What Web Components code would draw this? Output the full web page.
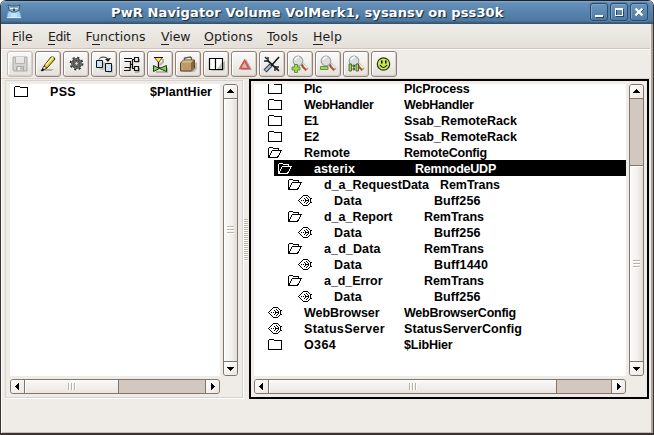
<!DOCTYPE html>
<html lang="en">
<head>
<meta charset="utf-8">
<title>PwR Navigator</title>
<style>
html,body{margin:0;width:654px;height:435px;overflow:hidden;background:#fff}
</style>
</head>
<body>
<nav-window></nav-window>
<script>
const define=(name,css,html,ready)=>customElements.define(name,class extends HTMLElement{
  connectedCallback(){
    if(this.shadowRoot)return;
    const root=this.attachShadow({mode:'open'});
    root.innerHTML=`<style>:host{box-sizing:border-box}*{box-sizing:border-box}${css}</style>${typeof html==='function'?html(this):html}`;
    if(ready)ready(this,root);
  }
});

/* Text run whose letter spacing is adjusted to fill the given width */
define('fit-text',':host{display:block;white-space:nowrap}span{display:inline-block;white-space:pre}u{text-decoration:none;box-shadow:0 1px 0 #222}',
  el=>{const t=el.getAttribute('text'),k=el.getAttribute('key');
    if(!k)return `<span>${t}</span>`;
    const i=t.indexOf(k);
    return `<span>${t.slice(0,i)}<u>${k}</u>${t.slice(i+1)}</span>`},
  (el,root)=>{const s=root.querySelector('span'),w=+el.getAttribute('w'),t=el.getAttribute('text');
    if(w)s.style.letterSpacing=((w-s.getBoundingClientRect().width)/t.length)+'px';});

define('window-button',`:host{display:block;width:18px;height:18px;border:1px solid #2d4b68;border-radius:3px;background:linear-gradient(#6c96be,#4f7ba5);box-shadow:inset 1px 1px 0 #7ea5ca,0 0 0 1px #5682ab}svg{display:block}`,
  el=>`<svg width="16" height="16" viewBox="0 0 16 16" shape-rendering="crispEdges">${{
    min:'<path d="M5 12h8v2H5z" fill="#24425e"/><path d="M4 11h8v2H4z" fill="#fff"/>',
    max:'<path d="M5.5 5.5h7v7h-7z" fill="none" stroke="#29475f"/><path d="M4 4h8v8H4zM5 6v5h6V6z" fill="#fff" fill-rule="evenodd"/>',
    close:'<path d="m5 5 7 7m0-7-7 7" stroke="#24425e" stroke-width="2"/><path d="m4.500 4.500 7 7m0-7-7 7" stroke="#fff" stroke-width="2.400" shape-rendering="auto"/>'}[el.getAttribute('kind')]}</svg>`);

define('title-bar',`:host{display:grid;grid-template-columns:110px 1fr auto;height:24px;background:linear-gradient(#222 0 1px,#7ba2c8 1px 2px,#658fb8 3px,#5481ab 14px,#4e789f 21px,#416486 22px,#344f68 24px);border-radius:5px 5px 0 0}
.logo{padding:4px 0 0 5px}svg{display:block}fit-text{font:bold 13px/24px "DejaVu Sans",sans-serif;color:#fff;text-shadow:1px 1px 1px #142536;padding-top:1px}
.buttons{display:flex;gap:2px;padding:3px 5px 0 0}`,
`<div class="logo"><svg width="16" height="16" viewBox="0 0 16 16"><path d="M3 7Q1 9 1 14h14q0-5-2-7z" fill="#a9d2f3" stroke="#6d9ac0" stroke-width=".8"/><path d="m2 1 3 1h6l3-1-1 5-3 2H6L3 6z" fill="#8eb0ca" stroke="#37566f" stroke-width=".9"/><path d="M4 4h3v1H4zm5 0h3v1H9z" fill="#d7efff"/><path d="M7 5h2v2H7z" fill="#304a61"/><path d="M5 9h6v4H5z" fill="#c2e2fa"/><path d="M1 13h14v1H1z" fill="#d9eefd"/></svg></div>
<fit-text text="PwR Navigator Volume VolMerk1, sysansv on pss30k" w="392.5"></fit-text>
<div class="buttons"><window-button kind="min"></window-button><window-button kind="max"></window-button><window-button kind="close"></window-button></div>`);

define('menu-bar',`:host{display:flex;height:25px;padding:1px 0 0 11px;margin-right:3px;background:linear-gradient(#f0ece8,#e4dfd8);border-bottom:1px solid #cfc5bb;font:12.5px/24px "DejaVu Sans",sans-serif;color:#1c1c1c}fit-text{width:var(--s)}`,
  [['File','F',20.5,36],['Edit','E',22.5,37.5],['Functions','u',60,75.5],['View','V',29.5,43],['Options','O',49,63],['Tools','T',31,46],['Help','H',29,40]]
  .map(([t,k,w,s])=>`<fit-text text="${t}" key="${k}" w="${w}" style="--s:${s}px"></fit-text>`).join(''));

const lens='<path d="m15 13 5 6" stroke="#aaa49f" stroke-width="4"/><path d="m14 13 5 5" stroke="#eee" stroke-width="4"/><path d="m15 15 4 4" stroke="#bd4d18" stroke-width="2"/><path d="m14 13 2 2" stroke="#555" stroke-width="2"/><circle cx="11" cy="10" r="4.800" fill="#d9dddd" stroke="#a3a3a3" stroke-width="1.200"/><path d="M8 9q1-3 4-3" stroke="#fff" stroke-width="1.500" fill="none"/>';
const icons={
  save:'<path d="M6 6h14v14H7l-1-1z" fill="#d5d3d0" stroke="#aaa7a3"/><path d="M8.500 6v6.500h9V6" fill="#e9e7e4" stroke="#b6b2ae"/><path d="M9.500 20v-4.500h7V20" fill="#c3c0bc" stroke="#aaa"/><path d="M11 16h2v3h-2z" fill="#f0eeeb"/>',
  pencil:'<path d="M8 20h8l3-2h-7z" fill="#b3afa9"/><path d="m9 15 7-9q3-1 4 2l-8 9-5 3z" fill="#e5ca29" stroke="#312d12"/><path d="m11 14 7-8" stroke="#fff49a" stroke-width="1.500"/><path d="m9 15 3 2-6 3z" fill="#eee" stroke="#222" stroke-width=".7"/><path d="m6 20 2-3 1 2z" fill="#000"/>',
  gear:'<g transform="translate(13.500 12.500)"><circle r="6" fill="none" stroke="#333" stroke-width="1.800" stroke-dasharray="2.200 2.510"/><circle r="3.800" fill="none" stroke="#4a4a4a" stroke-width="3.200"/><circle r="3.900" fill="none" stroke="#878787" stroke-dasharray="2 1"/><circle r="1.800" fill="#ddd" stroke="#222" stroke-width=".8"/></g>',
  copy:'<path d="M7 11h7v8H9zM16 14h6v8h-5z" fill="#c9c5c0"/><path d="M5.500 9.500h6v7h-6zM14.500 12.500h6v8h-6z" fill="#cbe2fb" stroke="#111"/><path d="M8 8.500q1-3 5-2.500t4 3" fill="none" stroke="#333"/><path d="m14 8 6-1-3 4z" fill="#222"/>',
  net:'<path d="M20 8v3h-4M20 17v4h-4" stroke="#777" fill="none"/><path d="M5.500 10.500h6v6h-6M15.500 6.500h4v4h-4zM15.500 15.500h4v4h-4zM11.500 13.500h2v4h2M13.500 13.500v-5h2M5 7.500h8M5 19.500h6v-3" fill="none" stroke="#111" stroke-width="1.200"/>',
  valve:'<path d="M16 8v3l-3 3M20 17v4H9" stroke="#b7b3ad" stroke-width="2" fill="none"/><path d="M7.500 6.500h8l-4 5z" fill="#ffe54c" stroke="#555020"/><path d="M7 6.500h9" stroke="#111"/><path d="M11.500 11v6h2" stroke="#111" fill="none" stroke-width="1.300"/><path d="m6.500 14.500 6 3-6 3zM19.500 14.500v6l-7-3z" fill="#8ece52" stroke="#173f13"/>',
  case:'<path d="M7 21h12l3-3v-7z" fill="#bdb8b0"/><path d="M9.500 10V7l6-1 1 1v3" fill="none" stroke="#645b4c" stroke-width="1.400"/><path d="m5.500 12 3-3h11v8l-3 3h-11z" fill="#bb9c69" stroke="#594930"/><path d="M6 12h10v7H6z" fill="#bd9b67"/><path d="m16 12 3-3v8l-3 3z" fill="#87683c"/><path d="m8.500 9.500-2 2H16l2-2z" fill="#d6bc8f"/>',
  book:'<path d="m8 20h12l2-2v-8z" fill="#bcb8b2"/><path d="M6.500 7.500h13v11h-13z" fill="#fff" stroke="#000" stroke-width="1.200"/><path d="M12.500 7v12" stroke="#000" stroke-width="1.200"/><path d="m14 18 5-7v7z" fill="#c6c3bf"/>',
  alarm:'<path d="m15 8 6 11H10z" fill="#aaa7a3"/><path d="m13.500 9.500 4.500 8H9z" fill="#c5c0b9" stroke="#e34d45" stroke-width="1.700"/>',
  tools:'<path d="m8 9 11 10" stroke="#222" stroke-width="1.800"/><path d="m20 6-8 9" stroke="#111" stroke-width="1.500"/><path d="m12 14-6 6" stroke="#34414b" stroke-width="4.200"/><path d="m11.500 14.500-5 5" stroke="#9fbfd8" stroke-width="2.200"/><path d="M9 6v4H5m11 10v-4h4M6 6l2 2m10 10 2 2" fill="none" stroke="#222" stroke-width="1.400"/>',
  plus:lens+'<path d="M7.500 13.500h3v2.500h2.500v3h-2.500v2.500h-3V19H5v-3h2.500z" fill="#9bd94a" stroke="#587b31" stroke-width=".8"/>',
  minus:lens+'<path d="M5.500 15.500h7.500v3H5.500z" fill="#9bd94a" stroke="#587b31" stroke-width=".8"/>',
  one:lens+'<path d="M6 13h2.500v7H6zM13 13h2.500v7H13zM10 14h1.500v2H10zM10 17h1.500v2H10z" fill="#9bd94a" stroke="#303d25" stroke-width=".7"/>',
  smile:'<circle cx="12.500" cy="13" r="6.200" fill="#c9e458" stroke="#303817" stroke-width="1.200"/><path d="M10 9.500h1.500v3H10zM14 9.500h1.500v3H14z" fill="#111"/><path d="M9 14q3.500 5 7 0" fill="none" stroke="#111" stroke-width="1.200"/>'};
define('tool-button',`:host{display:block;width:26px;height:26px;border:1px solid #91817a;border-radius:3px;background:linear-gradient(#faf9f8,#efedea 55%,#e5e0db);box-shadow:inset 1px 1px 0 #fff,inset -1px -1px 0 #d7cfc7}:host([off]){border-color:#c4bbb1}svg{display:block;margin:-1px}`,
  el=>`<svg width="26" height="26" viewBox="0 0 26 26">${icons[el.getAttribute('icon')]}</svg>`);
define('tool-bar',`:host{display:flex;gap:2px;height:30px;padding:1px 0 0 6px;margin-right:3px;border-top:1px solid #fbfaf8;border-bottom:1px solid #d9d2ca}`,
  Object.keys(icons).map((k,i)=>`<tool-button icon="${k}"${i?'':' off'}></tool-button>`).join(''));

/* Scroll bar: before = trough ahead of the thumb, size = thumb length */
define('scroll-bar',`:host{display:flex;border:1px solid #82756c;border-radius:3px;background:#d2c8bf;overflow:hidden}
:host([dir=v]){flex-direction:column;width:15px;height:292px}:host([dir=h]){height:15px}
.b{flex:none;width:13px;height:13px;background:linear-gradient(135deg,#fff,#eae6e2);display:block}
.gap{flex:none}.t{flex:none;display:flex;align-items:center;justify-content:center;background:linear-gradient(#fbfaf9,#e9e5e1);box-shadow:inset 1px 1px 0 #fff}
:host([dir=v]) .t{background:linear-gradient(90deg,#fcfbfa,#f2f0ed 60%,#e1dcd6);border:solid #82756c;border-width:1px 0}
:host([dir=h]) .t{border:solid #82756c;border-width:0 1px}.fill{flex:1}
i{display:block;width:8px;height:7px;background:repeating-linear-gradient(90deg,#bdb2a3 0 1px,#fff 1px 2px,transparent 2px 3px)}
:host([dir=v]) i{width:7px;height:8px;background:repeating-linear-gradient(#bdb2a3 0 1px,#fff 1px 2px,transparent 2px 3px)}
.first{border:0 solid #82756c}.last{border:0 solid #82756c}:host([dir=h][split]) .last{border-left-width:1px;width:14px}:host([dir=v][split]) .first{border-bottom-width:1px;height:14px}`,
  el=>{const v=el.getAttribute('dir')==='v',p=v?'height':'width';
    const a=v?['M6 4h1v1h1v1h1v1h1v1H3V7h1V6h1V5h1z','M3 5h7v1H9v1H8v1H7v1H6V8H5V7H4V6H3z']:['M8 3v7H7V9H6V8H5V7H4V6h1V5h1V4h1V3z','M5 3v7h1V9h1V8h1V7h1V6H8V5H7V4H6V3z'];
    const s=d=>`<svg width="13" height="13" style="display:block" shape-rendering="crispEdges"><path d="${d}"/></svg>`;
    return `<div class="b first">${s(a[0])}</div><div class="gap" style="${p}:${el.getAttribute('before')}px"></div><div class="t" style="${p}:${el.getAttribute('size')}px"><i></i></div><div class="fill"></div><div class="b last">${s(a[1])}</div>`});

const glyphs={
  folder:'<path d="M.5 13.500V4.500l1-1h4l1 1h7v9z" fill="none" stroke="currentColor"/>',
  open:'<path d="M.5 13.500v-9l1-1h3l1 1h5v2M.5 13.500h9l4-7H4.500l-4 7" fill="none" stroke="currentColor"/>',
  leaf:'<path d="M0 8.500h1M1 7.500h1M1 9.500h1M2 6.500h1M2 10.500h1M3 5.500h1M3 11.500h1M4 4.500h1M4 12.500h1M5 3.500h5M5 13.500h5M10 4.500h1M10 12.500h1M11 5.500h1M11 11.500h1M12.500 6v5M13 6.500h1M13 10.500h1M3 8.500h1M5 8.500h1M7 8.500h1M9 8.500h2M6 6.500h1M7 7.500h1M8 8.500h1M7 9.500h1M6 10.500h1M8 5.500h1M9 6.500h1M10 7.500h1M10 9.500h1M9 10.500h1M8 11.500h1" stroke="currentColor"/>'};
define('tree-row',`:host{display:flex;height:16px;flex:none;color:#000;font:bold 12.5px/16px "Liberation Sans",Arial,sans-serif}
.r{display:grid;flex:1;grid-template-columns:36px var(--n) 1fr;margin-left:var(--m);padding-left:var(--p)}:host([sel]) .r{background:#000;color:#fff}svg{display:block}fit-text{padding-top:1px;height:16px;line-height:16px}`,
  el=>{const g=n=>el.getAttribute(n),l=+g('level'),sel=el.hasAttribute('sel'),m=sel?20:14+l*10-(+g('shift')||0);
    return `<div class="r" style="--m:${m}px;--p:${sel?4:0}px;--n:${g('col')||100}px"><svg width="14" height="16" shape-rendering="crispEdges">${glyphs[g('icon')]}</svg><fit-text text="${g('name')}" w="${g('nw')}"></fit-text><fit-text text="${g('type')}" w="${g('tw')}"></fit-text></div>`});

define('tree-pane',`:host{display:grid;grid-template-columns:var(--w) 15px;gap:3px;align-content:start;padding:var(--pad)}
.list{background:#fff;height:292px;overflow:hidden;display:flex;flex-direction:column}.rows{display:flex;flex-direction:column;margin-top:var(--offset)}`,
  `<div class="list"><div class="rows"><slot></slot></div></div><slot name="v"></slot><slot name="h"></slot>`);

const row=([level,icon,name,type,nw,tw,col,sel])=>`<tree-row level="${level}" icon="${icon}" name="${name}" type="${type}" nw="${nw}" tw="${tw}" ${col?`col="${col}"`:''} ${sel?'sel':''}></tree-row>`;
const tree=[
[0,'folder','Plc','PlcProcess',18,65.5],
[0,'folder','WebHandler','WebHandler',69.5,69.5],
[0,'folder','E1','Ssab_RemoteRack',14,113],
[0,'folder','E2','Ssab_RemoteRack',15,113],
[0,'open','Remote','RemoteConfig',46,83],
[1,'open','asterix','RemnodeUDP',41,81,101,1],
[2,'open','d_a_RequestData','RemTrans',105,60,116],
[3,'leaf','Data','Buff256',28,46.5],
[2,'open','d_a_Report','RemTrans',68.5,60],
[3,'leaf','Data','Buff256',28,46.5],
[2,'open','a_d_Data','RemTrans',56.5,60],
[3,'leaf','Data','Buff1440',28,54],
[2,'open','a_d_Error','RemTrans',58.5,60],
[3,'leaf','Data','Buff256',28,46.5],
[0,'leaf','WebBrowser','WebBrowserConfig',75.5,112],
[0,'leaf','StatusServer','StatusServerConfig',81,118],
[0,'folder','O364','$LibHier',32,48.5]];

define('nav-window',`:host{display:flex;flex-direction:column;width:654px;height:435px;background:#efebe6;border:solid #3b3331;border-width:0 1px 2px;border-radius:6px 6px 0 0;box-shadow:inset 1px 0 0 #fff,inset -2px 0 0 #aba39b,inset 0 -1px 0 #c6bdb5;overflow:hidden}
title-bar,menu-bar,tool-bar{flex:none}
.main{display:grid;grid-template-columns:238px 6px 400px;height:320px;padding-left:4px}
.left{--w:210px;--pad:3px 4px;--offset:-1px;border:1px solid #d4d3d1;box-shadow:1px 1px 0 #fff;height:318px;margin-top:1px}
.right{--w:372px;--pad:3px 3px;--offset:-4px;border:2px solid #000;height:320px;box-shadow:inset 3px 3px 0 #f5ecea}
.grip{align-self:center;justify-self:center;width:4px;height:42px;margin-top:1px;background:repeating-linear-gradient(#bdb2a3 0 1px,#fff 1px 2px)}`,
`<title-bar></title-bar><menu-bar></menu-bar><tool-bar></tool-bar>
<div class="main">
<tree-pane class="left">${row([0,'folder','PSS','$PlantHier',26,62]).replace('<tree-row','<tree-row shift="10"')}
<scroll-bar slot="v" dir="v" before="0" size="264"></scroll-bar><scroll-bar slot="h" dir="h" before="0" size="95" split></scroll-bar></tree-pane>
<div class="grip"></div>
<tree-pane class="right">${tree.map(row).join('')}
<scroll-bar slot="v" dir="v" before="66" size="197" split></scroll-bar><scroll-bar slot="h" dir="h" before="0" size="289" split></scroll-bar></tree-pane>
</div>`);
</script>
</body>
</html>
